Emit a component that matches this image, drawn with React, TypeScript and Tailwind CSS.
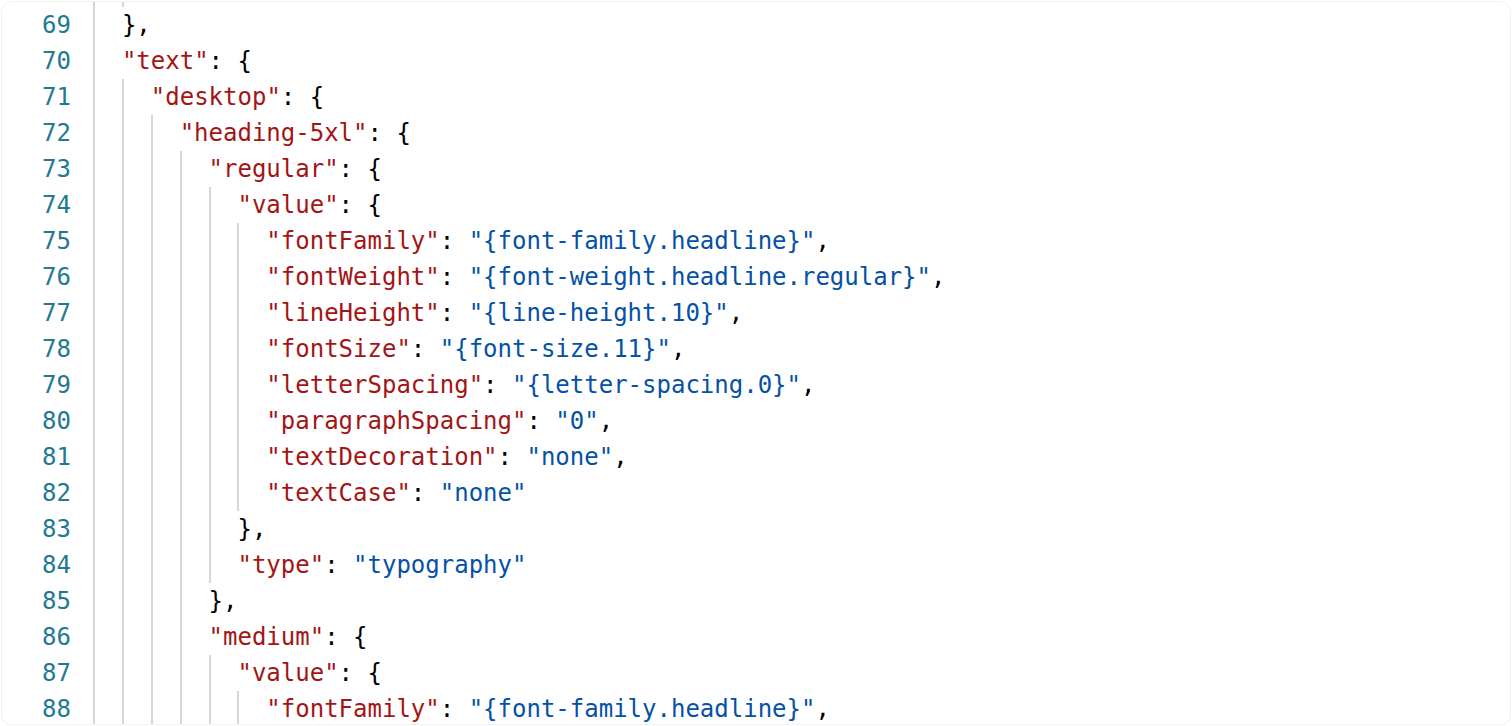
import React from 'react';

type Line = { n: number; level: number; text: string };

// visible slice of the tokens json file
const lines: Line[] = [
  { n: 69, level: 1, text: '},' },
  { n: 70, level: 1, text: '"text": {' },
  { n: 71, level: 2, text: '"desktop": {' },
  { n: 72, level: 3, text: '"heading-5xl": {' },
  { n: 73, level: 4, text: '"regular": {' },
  { n: 74, level: 5, text: '"value": {' },
  { n: 75, level: 6, text: '"fontFamily": "{font-family.headline}",' },
  { n: 76, level: 6, text: '"fontWeight": "{font-weight.headline.regular}",' },
  { n: 77, level: 6, text: '"lineHeight": "{line-height.10}",' },
  { n: 78, level: 6, text: '"fontSize": "{font-size.11}",' },
  { n: 79, level: 6, text: '"letterSpacing": "{letter-spacing.0}",' },
  { n: 80, level: 6, text: '"paragraphSpacing": "0",' },
  { n: 81, level: 6, text: '"textDecoration": "none",' },
  { n: 82, level: 6, text: '"textCase": "none"' },
  { n: 83, level: 5, text: '},' },
  { n: 84, level: 5, text: '"type": "typography"' },
  { n: 85, level: 4, text: '},' },
  { n: 86, level: 4, text: '"medium": {' },
  { n: 87, level: 5, text: '"value": {' },
  { n: 88, level: 6, text: '"fontFamily": "{font-family.headline}",' },
];

const Tokens: React.FC<{ text: string }> = ({ text }) => {
  const parts = text.match(/"[^"]*"|[^"]+/g) || [];
  return (
    <>
      {parts.map((p, i) => {
        let cls = 'text-black';
        if (p.startsWith('"')) {
          const rest = parts.slice(i + 1).join('');
          cls = rest.trimStart().startsWith(':') ? 'text-[#a31515]' : 'text-[#0451a5]';
        }
        return (
          <span key={i} className={cls}>
            {p}
          </span>
        );
      })}
    </>
  );
};

const Guides: React.FC<{ level: number }> = ({ level }) => (
  <>
    {Array.from({ length: level }).map((_, i) => (
      <span key={i} className="h-full w-[2ch] shrink-0 border-l-2 border-[#d6d6d6]" />
    ))}
  </>
);

const App: React.FC = () => {
  return (
    <div className="h-[726px] w-full overflow-hidden bg-white p-px">
      <div className="h-[724px] overflow-hidden rounded-[10px] border border-[#f2f2f2] bg-white font-['DejaVu_Sans_Mono','Liberation_Mono',monospace] text-[24px]">
        {/* tail of line 68, only its guides show */}
        <div className="flex h-[5px]">
          <div className="w-[91px] shrink-0" />
          <Guides level={2} />
        </div>
        {lines.map((l) => (
          <div key={l.n} className="flex h-[36px] leading-[36px]">
            <div className="w-[69px] shrink-0 text-right text-[#237893]">{l.n}</div>
            <div className="w-[22px] shrink-0" />
            <div className="flex h-full">
              <Guides level={l.level} />
              <span className="whitespace-pre">
                <Tokens text={l.text} />
              </span>
            </div>
          </div>
        ))}
      </div>
    </div>
  );
};

export default App;
